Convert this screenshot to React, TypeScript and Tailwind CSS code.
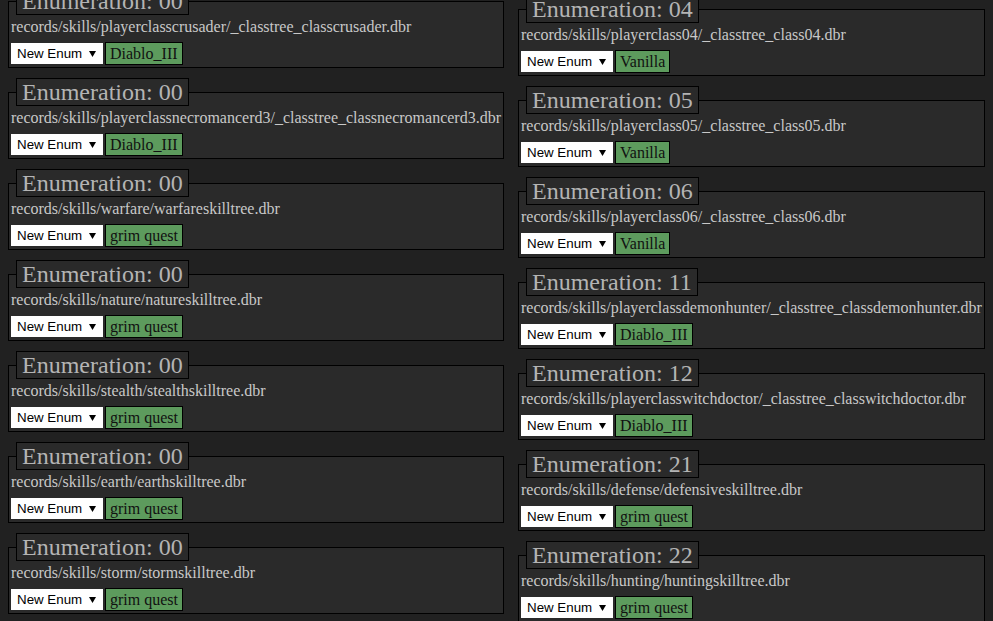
import React from 'react';

type EnumItem = {
  id: string;
  path: string;
  tag: string;
};

const leftItems: EnumItem[] = [
  { id: '00', path: 'records/skills/playerclasscrusader/_classtree_classcrusader.dbr', tag: 'Diablo_III' },
  { id: '00', path: 'records/skills/playerclassnecromancerd3/_classtree_classnecromancerd3.dbr', tag: 'Diablo_III' },
  { id: '00', path: 'records/skills/warfare/warfareskilltree.dbr', tag: 'grim quest' },
  { id: '00', path: 'records/skills/nature/natureskilltree.dbr', tag: 'grim quest' },
  { id: '00', path: 'records/skills/stealth/stealthskilltree.dbr', tag: 'grim quest' },
  { id: '00', path: 'records/skills/earth/earthskilltree.dbr', tag: 'grim quest' },
  { id: '00', path: 'records/skills/storm/stormskilltree.dbr', tag: 'grim quest' },
];

const rightItems: EnumItem[] = [
  { id: '04', path: 'records/skills/playerclass04/_classtree_class04.dbr', tag: 'Vanilla' },
  { id: '05', path: 'records/skills/playerclass05/_classtree_class05.dbr', tag: 'Vanilla' },
  { id: '06', path: 'records/skills/playerclass06/_classtree_class06.dbr', tag: 'Vanilla' },
  { id: '11', path: 'records/skills/playerclassdemonhunter/_classtree_classdemonhunter.dbr', tag: 'Diablo_III' },
  { id: '12', path: 'records/skills/playerclasswitchdoctor/_classtree_classwitchdoctor.dbr', tag: 'Diablo_III' },
  { id: '21', path: 'records/skills/defense/defensiveskilltree.dbr', tag: 'grim quest' },
  { id: '22', path: 'records/skills/hunting/huntingskilltree.dbr', tag: 'grim quest' },
];

function EnumBox({ item }: { item: EnumItem }) {
  return (
    <fieldset className="mb-[10px] border border-black bg-[#2a2a2a] px-[2px] pb-[2px]">
      <legend className="ml-[5px] border border-black bg-[#2a2a2a] px-[5px] text-[24px] leading-[26px] text-[#b4b4b4]">
        Enumeration: {item.id}
      </legend>
      <div className="mt-[3px] whitespace-nowrap text-[16px] leading-[18px] text-[#c8c8c8]">{item.path}</div>
      <div className="mt-[6px] flex items-center gap-[2px]">
        {/* fake select */}
        <div className="flex h-[21px] w-[92px] items-center justify-between bg-white pl-[6px] pr-[7px] font-['Liberation_Sans',Arial,sans-serif] text-[13.33px] text-black">
          <span>New Enum</span>
          <svg width="7" height="6" viewBox="0 0 7 6">
            <path d="M0 0h7L3.5 6z" fill="#000" />
          </svg>
        </div>
        <div className="h-[23px] border border-black bg-[#5d9b5d] px-[4px] text-[16px] leading-[21px] text-[#111]">
          {item.tag}
        </div>
      </div>
    </fieldset>
  );
}

export default function App() {
  return (
    <div className="h-[621px] overflow-hidden bg-[#212121] font-['Liberation_Serif','Times_New_Roman',serif]">
      <div className="-mt-[13px] flex items-start pl-[8px]">
        <div className="w-[496px]">
          {leftItems.map((item, idx) => (
            <EnumBox key={idx} item={item} />
          ))}
        </div>
        <div className="ml-[14px] mt-[8px] w-[467px]">
          {rightItems.map((item, idx) => (
            <EnumBox key={idx} item={item} />
          ))}
        </div>
      </div>
    </div>
  );
}
